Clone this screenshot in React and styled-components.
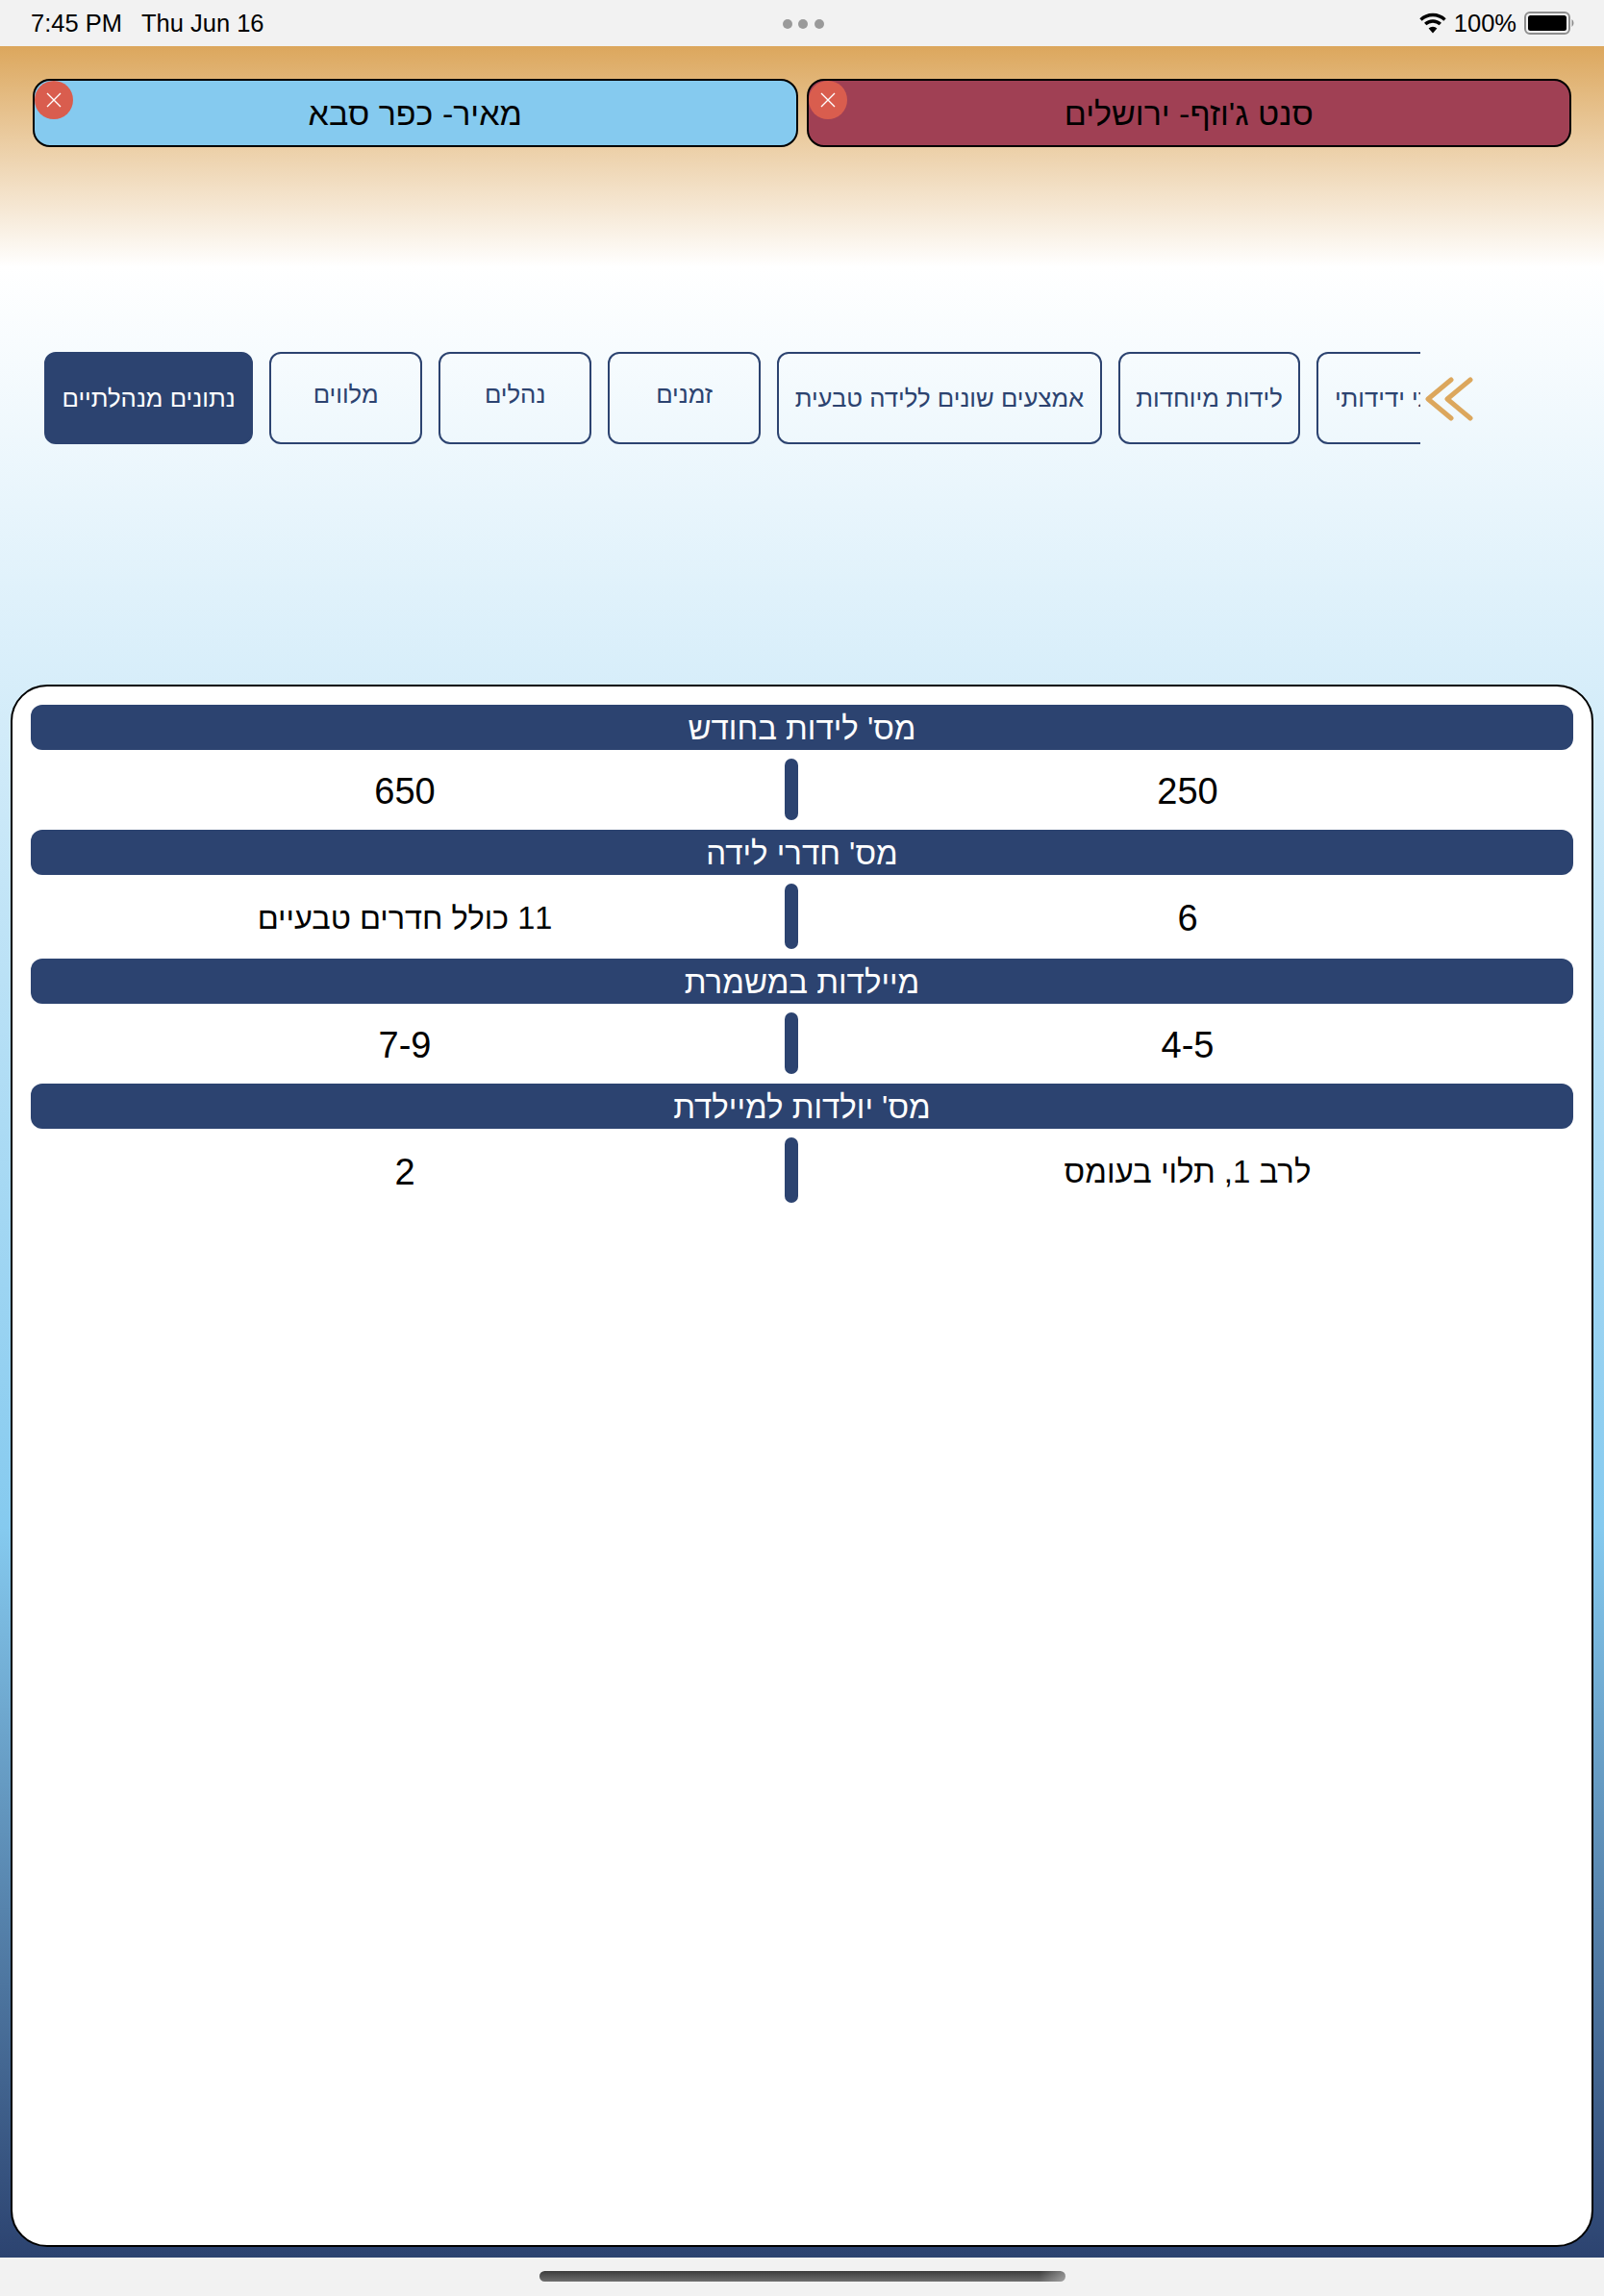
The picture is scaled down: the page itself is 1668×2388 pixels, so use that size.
import React from 'react';
import styled, { createGlobalStyle } from 'styled-components';

const navy = '#2c4370';
const orange = '#dca75d';

const GlobalStyle = createGlobalStyle`
  html, body {
    margin: 0;
    padding: 0;
  }
  body {
    font-family: "Liberation Sans", Arial, sans-serif;
    background: #f2f2f2;
  }
  * {
    box-sizing: border-box;
  }
`;

const tabs = [
  { label: 'נתונים מנהלתיים', active: true },
  { label: 'מלווים', raised: true },
  { label: 'נהלים', raised: true },
  { label: 'זמנים', raised: true },
  { label: 'אמצעים שונים ללידה טבעית' },
  { label: 'לידות מיוחדות' },
  { label: 'שירותי ידידותי' },
];

const rows = [
  { title: "מס' לידות בחודש", right: '250', left: '650' },
  { title: "מס' חדרי לידה", right: '6', left: '11 כולל חדרים טבעיים', leftWords: true, tall: true },
  { title: 'מיילדות במשמרת', right: '4-5', left: '7-9' },
  { title: "מס' יולדות למיילדת", right: 'לרב 1, תלוי בעומס', left: '2', rightWords: true, tall: true },
];

function WifiIcon() {
  return (
    <svg width="28" height="22" viewBox="0 0 28 22">
      <path d="M1.5 7.5 A18 18 0 0 1 26.5 7.5" fill="none" stroke="#000" strokeWidth="3.4" />
      <path d="M6.2 12 A11.5 11.5 0 0 1 21.8 12" fill="none" stroke="#000" strokeWidth="3.4" />
      <path d="M14 21.5 L9.6 16.4 A6.4 6.4 0 0 1 18.4 16.4 Z" fill="#000" />
    </svg>
  );
}

function BatteryIcon() {
  return (
    <svg width="53" height="24" viewBox="0 0 53 24">
      <rect x="1" y="1" width="46" height="22" rx="5" fill="none" stroke="#8e8e8e" strokeWidth="2" />
      <rect x="4" y="4" width="40" height="16" rx="2.5" fill="#000" />
      <path d="M49.5 8 A5 5 0 0 1 49.5 16 Z" fill="#8e8e8e" />
    </svg>
  );
}

function CloseIcon() {
  return (
    <svg width="16" height="16" viewBox="0 0 16 16">
      <path d="M1 1 L15 15 M15 1 L1 15" stroke="#fff" strokeWidth="1.4" fill="none" />
    </svg>
  );
}

function ChevronsIcon() {
  return (
    <svg width="50" height="46" viewBox="0 0 50 46">
      <path
        d="M27 3 L3 23 L27 43 M47 3 L23 23 L47 43"
        fill="none"
        stroke={orange}
        strokeWidth="5"
        strokeLinecap="round"
        strokeLinejoin="round"
      />
    </svg>
  );
}

function App() {
  return (
    <Screen>
      <GlobalStyle />
      <StatusBar>
        <StatusLeft>
          <span>7:45 PM</span>
          <span>Thu Jun 16</span>
        </StatusLeft>
        <Dots>
          <i />
          <i />
          <i />
        </Dots>
        <StatusRight>
          <WifiIcon />
          <span>100%</span>
          <BatteryIcon />
        </StatusRight>
      </StatusBar>

      <Main>
        <Chips dir="rtl">
          <Chip $bg="#a04054">
            סנט ג'וזף- ירושלים
            <CloseButton><CloseIcon /></CloseButton>
          </Chip>
          <Chip $bg="#85caef">
            מאיר- כפר סבא
            <CloseButton><CloseIcon /></CloseButton>
          </Chip>
        </Chips>

        <TabsRow>
          <TabsScroller>
            {tabs.map((tab) => (
              <Tab key={tab.label} dir="rtl" $active={tab.active} $raised={tab.raised}>
                {tab.label}
              </Tab>
            ))}
          </TabsScroller>
          <ChevronBox><ChevronsIcon /></ChevronBox>
        </TabsRow>

        <Card dir="rtl">
          {rows.map((row) => (
            <React.Fragment key={row.title}>
              <SectionTitle>{row.title}</SectionTitle>
              <ValueRow $tall={row.tall}>
                <RightValue $words={row.rightWords}>{row.right}</RightValue>
                <Divider />
                <LeftValue $words={row.leftWords}>{row.left}</LeftValue>
              </ValueRow>
            </React.Fragment>
          ))}
        </Card>
      </Main>

      <BottomBar>
        <HomeIndicator />
      </BottomBar>
    </Screen>
  );
}

const Screen = styled.div`
  display: flex;
  flex-direction: column;
  width: 1668px;
  height: 2388px;
  overflow: hidden;
`;

const StatusBar = styled.div`
  display: grid;
  grid-template-columns: 1fr auto 1fr;
  align-items: center;
  height: 48px;
  padding: 0 30px 0 32px;
  background: #f2f2f2;
  color: #000;
  font-size: 25.5px;
`;

const StatusLeft = styled.div`
  display: flex;
  gap: 20px;
`;

const Dots = styled.div`
  display: flex;
  gap: 6.5px;
  margin-top: 2px;

  i {
    width: 10px;
    height: 10px;
    border-radius: 50%;
    background: #9a9a9a;
  }
`;

const StatusRight = styled.div`
  display: flex;
  align-items: center;
  justify-content: flex-end;
  gap: 8px;
`;

const Main = styled.div`
  flex: 1;
  display: flex;
  flex-direction: column;
  min-height: 0;
  background: linear-gradient(
    180deg,
    ${orange} 0%,
    #ffffff 10%,
    #85caef 67%,
    ${navy} 100%
  );
`;

const Chips = styled.div`
  display: grid;
  grid-template-columns: 1fr 1fr;
  gap: 9px;
  padding: 34px 34px 0;
`;

const Chip = styled.div`
  position: relative;
  display: flex;
  align-items: center;
  justify-content: center;
  height: 71px;
  padding-top: 2px;
  border: 2px solid #000;
  border-radius: 18px;
  background: ${(p) => p.$bg};
  color: #000;
  font-size: 34px;
`;

const CloseButton = styled.div`
  position: absolute;
  top: 0;
  left: 0;
  display: flex;
  align-items: center;
  justify-content: center;
  width: 40px;
  height: 40px;
  border-radius: 50%;
  background: #d95d4e;
`;

const TabsRow = styled.div`
  display: flex;
  align-items: center;
  gap: 5px;
  margin-top: 213px;
  padding-left: 46px;
`;

const TabsScroller = styled.div`
  display: flex;
  gap: 17px;
  width: 1431px;
  overflow: hidden;
`;

const Tab = styled.div`
  flex-shrink: 0;
  display: flex;
  align-items: center;
  justify-content: center;
  min-width: 159px;
  height: 96px;
  padding: 0 16.5px ${(p) => (p.$raised ? '8px' : '0')};
  border: 2px solid ${navy};
  border-radius: 12px;
  background: ${(p) => (p.$active ? navy : 'transparent')};
  color: ${(p) => (p.$active ? '#fff' : navy)};
  font-size: 25.7px;
  white-space: nowrap;
`;

const ChevronBox = styled.div`
  display: flex;
  margin-top: 2px;
`;

const Card = styled.div`
  flex: 1;
  display: flex;
  flex-direction: column;
  gap: 9px;
  min-height: 0;
  margin: 250px 11px 11px;
  padding: 19px 19px 0;
  border: 2px solid #000;
  border-radius: 38px;
  background: #fff;
`;

const SectionTitle = styled.div`
  display: flex;
  align-items: center;
  justify-content: center;
  height: 47px;
  padding-top: 2px;
  border-radius: 12px;
  background: ${navy};
  color: #fff;
  font-size: 33px;
`;

const ValueRow = styled.div`
  display: grid;
  grid-template-columns: 806px 14px 1fr;
  height: ${(p) => (p.$tall ? '69px' : '65px')};
  color: #000;
`;

const RightValue = styled.div`
  display: flex;
  align-items: center;
  justify-content: center;
  padding: 3px 0 0 4px;
  font-size: ${(p) => (p.$words ? '33px' : '38px')};
`;

const LeftValue = styled.div`
  display: flex;
  align-items: center;
  justify-content: center;
  padding: 3px 6px 0 0;
  font-size: ${(p) => (p.$words ? '32.5px' : '38px')};
`;

const Divider = styled.div`
  margin-bottom: 1px;
  border-radius: 8px;
  background: ${navy};
`;

const BottomBar = styled.div`
  display: flex;
  justify-content: center;
  height: 40px;
  padding-top: 14px;
  background: #f2f2f2;
`;

const HomeIndicator = styled.div`
  width: 547px;
  height: 11px;
  border-radius: 6px;
  background:
    linear-gradient(90deg, rgba(242, 242, 242, 0) 95%, rgba(242, 242, 242, 0.4) 100%),
    linear-gradient(180deg, #3c3c3c, #6e6e6e);
`;

export default App;
